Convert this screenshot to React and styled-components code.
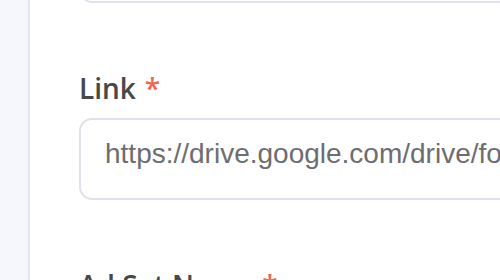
import React from "react";
import styled, { createGlobalStyle } from "styled-components";

const Global = createGlobalStyle`
  html, body { margin: 0; padding: 0; background: #ffffff; overflow: hidden; }
  * { box-sizing: border-box; }
`;

const Page = styled.div`
  display: flex;
  width: 500px;
  height: 280px;
  overflow: hidden;
  background: #ffffff;
`;

const Sidebar = styled.aside`
  flex: 0 0 30px;
  background: #f6f7fc;
  border-right: 2px solid #e3e5f1;
`;

const Main = styled.main`
  flex: 1;
  padding-left: 49px;
  min-width: 0;
`;

const Form = styled.div`
  display: flex;
  flex-direction: column;
  gap: 65px;
  margin-top: -129px;
  width: 600px;
`;

const Field = styled.div`
  display: flex;
  flex-direction: column;
  gap: 10px;
`;

const Label = styled.label`
  font-family: "Open Sans", sans-serif;
  font-weight: 600;
  font-size: 28px;
  line-height: 40px;
  color: #48484a;
  white-space: nowrap;
`;

const Required = styled.span`
  color: #f3644f;
  margin-left: 9px;
`;

const Input = styled.div`
  height: 82px;
  border: 2px solid #dfe2ea;
  border-radius: 13px;
  padding: 18px 0 0 24px;
  font-family: "Liberation Sans", Arial, sans-serif;
  font-size: 28px;
  line-height: 32px;
  color: #6d6d72;
  white-space: nowrap;
  overflow: hidden;
`;

export default function App() {
  return (
    <>
      <Global />
      <Page>
        <Sidebar />
        <Main>
          <Form>
            <Field>
              <Label>Ad Name<Required>*</Required></Label>
              <Input>My ad</Input>
            </Field>
            <Field>
              <Label>Link<Required>*</Required></Label>
              <Input>https://drive.google.com/drive/folders/1a2b3c</Input>
            </Field>
            <Field>
              <Label>Ad Set Name<Required>*</Required></Label>
              <Input>Ad set</Input>
            </Field>
          </Form>
        </Main>
      </Page>
    </>
  );
}
